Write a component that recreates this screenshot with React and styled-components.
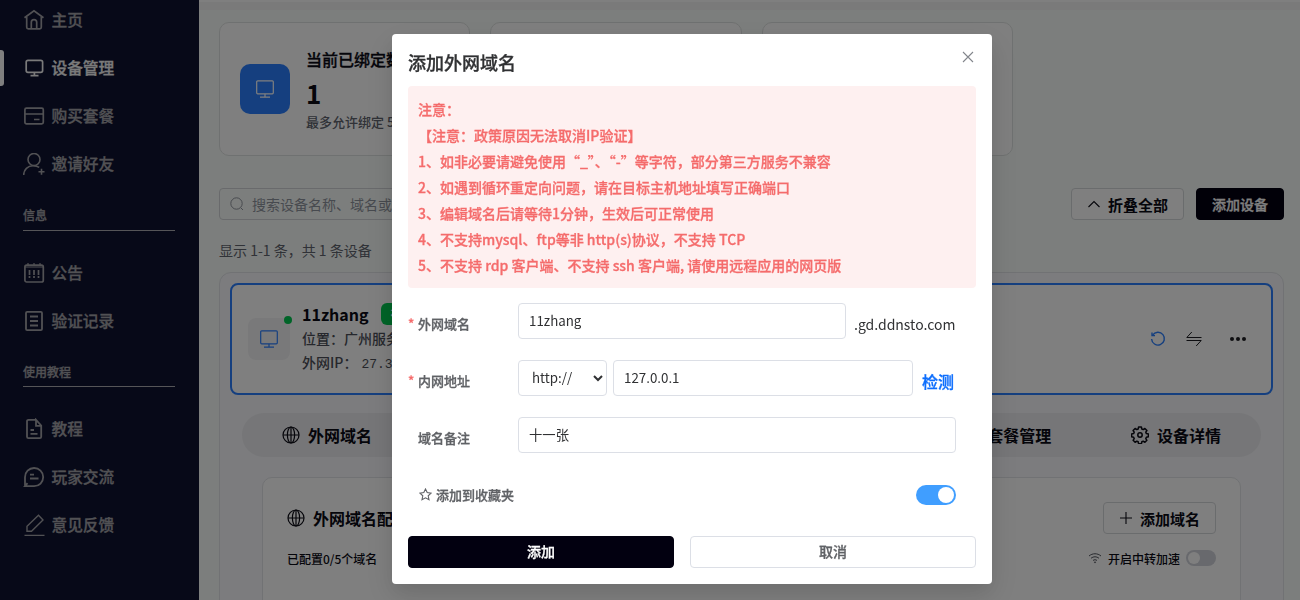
import React from "react";
import styled, { createGlobalStyle, css } from "styled-components";

const GlobalStyle = createGlobalStyle`
  * {
    box-sizing: border-box;
  }
  body {
    margin: 0;
    overflow: hidden;
    font-family: "Noto Sans CJK SC", sans-serif;
    color: #0a0a14;
  }
  button, input, select {
    font-family: inherit;
  }
`;

// a touch heavier than medium, without the wider bold letters
const strong = css`
  font-weight: 500;
  -webkit-text-stroke: 0.3px currentColor;
`;

const Page = styled.div`
  display: flex;
  width: 1300px;
  height: 600px;
  overflow: hidden;
  background: #f9fdfa;
`;

/* ---------- sidebar ---------- */

const Sidebar = styled.nav`
  flex: none;
  width: 199px;
  height: 604px;
  margin-top: -4px;
  background: #0f1230;
`;

const NavItem = styled.a`
  display: flex;
  align-items: center;
  gap: 6.5px;
  height: 48px;
  padding-left: 23px;
  font-size: 15.7px;
  color: ${(p) => (p.$active ? "#f4f4f4" : "#a3a3a8")};
  ${strong}

  svg {
    flex: none;
    width: 22px;
    height: 22px;
  }

  span {
    padding-bottom: 2px;
  }
`;

const ActiveRow = styled.div`
  display: flex;
  align-items: center;

  &::before {
    content: "";
    width: 4px;
    height: 36px;
    border-radius: 0 3px 3px 0;
    background: #fff;
  }

  ${NavItem} {
    padding-left: 19px;
  }
`;

const NavSection = styled.div`
  height: ${(p) => p.$height}px;
  padding: 18px 24px 0 23px;
  font-size: 12px;
  line-height: 18px;
  color: #a3a3a8;
  ${strong}

  &::after {
    content: "";
    display: block;
    height: 1px;
    margin-top: ${(p) => p.$height - 55}px;
    background: #aaaab0;
  }
`;

/* ---------- main ---------- */

const Main = styled.main`
  flex: 1;
  min-width: 0;
`;

const TopBar = styled.div`
  height: 10px;
  border-top: 2px solid #fff;
  background: #f4f4f4;
`;

const Content = styled.div`
  padding: 12px 16px 0 20px;
`;

const Stats = styled.div`
  display: grid;
  grid-template-columns: repeat(4, 1fr);
  gap: 20px;
`;

const StatCard = styled.div`
  display: flex;
  align-items: center;
  gap: 16px;
  height: 134px;
  padding: 0 20px;
  border: 1px solid #dfe3e2;
  border-radius: 10px;
  background: #fff;
  overflow: hidden;
  white-space: nowrap;
`;

const StatIcon = styled.div`
  display: flex;
  align-items: center;
  justify-content: center;
  flex: none;
  width: 50px;
  height: 50px;
  border-radius: 10px;
  background: #2b7fff;
  color: #fff;
`;

const StatTitle = styled.div`
  padding-top: 1px;
  font-size: 16px;
  line-height: 24px;
  ${strong}
`;

const StatValue = styled.div`
  margin-top: 3px;
  font-size: 26px;
  font-weight: 700;
  line-height: 38px;
`;

const StatNote = styled.div`
  font-size: 13px;
  font-weight: 500;
  line-height: 20px;
  color: #60646e;
`;

const Toolbar = styled.div`
  display: flex;
  gap: 12px;
  margin-top: 32px;
`;

const Search = styled.div`
  display: flex;
  align-items: center;
  gap: 8px;
  width: 400px;
  height: 32px;
  margin-right: auto;
  padding-left: 10px;
  border: 1px solid #d2d4d8;
  border-radius: 4px;
  font-size: 14px;
  color: #8f949e;
`;

const Button = styled.button`
  display: flex;
  align-items: center;
  justify-content: center;
  gap: 6px;
  width: ${(p) => p.$width || "auto"};
  height: 32px;
  padding: 0;
  border: 1px solid ${(p) => (p.$dark ? "#020010" : "#d5d8da")};
  border-radius: 4px;
  background: ${(p) => (p.$dark ? "#020010" : "#fff")};
  color: ${(p) => (p.$dark ? "#fff" : "#0a0a14")};
  font-size: 14px;
  line-height: 20px;
  ${strong}
`;

const IconButton = styled(Button)`
  font-size: 15px;
  font-weight: 700;
  -webkit-text-stroke: 0;

  span {
    padding: 2px 0 0 1px;
  }
`;

const Count = styled.div`
  margin-top: 19px;
  font-size: 14px;
  line-height: 22px;
  color: #60646e;
`;

const DevicePanel = styled.section`
  height: 400px;
  margin-top: 11px;
  padding: 10px;
  border: 1px solid #e2e4e8;
  border-radius: 12px;
  background: #f8f9fc;
`;

const DeviceCard = styled.div`
  display: flex;
  align-items: center;
  height: 112px;
  padding: 0 24px 0 16px;
  border: 2px solid #2b7fff;
  border-radius: 8px;
  background: #fff;
`;

const DeviceIcon = styled.div`
  position: relative;
  display: flex;
  align-items: center;
  justify-content: center;
  width: 42px;
  height: 42px;
  margin-right: 12px;
  border-radius: 8px;
  background: #f3f3f5;
  color: #2b7fff;
`;

const OnlineDot = styled.i`
  position: absolute;
  top: -2px;
  right: -2px;
  width: 8px;
  height: 8px;
  border-radius: 50%;
  background: #00c950;
`;

const DeviceInfo = styled.div`
  margin-right: auto;
  padding-bottom: 2px;
  font-size: 14px;
  font-weight: 500;
  line-height: 24px;
  color: #4c4f58;
`;

const DeviceName = styled.div`
  display: flex;
  align-items: center;
  gap: 12px;
  height: 27px;
  padding-top: 2px;
  font-size: 16px;
  font-weight: 700;
  color: #0a0a14;
`;

const Badge = styled.span`
  width: 50px;
  height: 22px;
  padding-left: 10px;
  border-radius: 6px;
  background: #00c950;
  color: #fff;
  font-size: 12px;
  line-height: 22px;
`;

const Ip = styled.span`
  margin-left: 4px;
  font-family: "Liberation Mono", monospace;
  font-size: 13px;
  font-weight: 400;
`;

const Actions = styled.div`
  display: flex;
  align-items: center;
  gap: 18px;
  color: #1c1d22;
`;

const RefreshWrap = styled.span`
  display: flex;
  color: #2b7fff;
`;

const MoreWrap = styled.span`
  display: flex;
  margin-left: 8px;
`;

const Tabs = styled.div`
  display: grid;
  grid-template-columns: repeat(6, 1fr);
  height: 44px;
  margin: 18px 12px 0;
  border-radius: 22px;
  background: #ececf0;
`;

const Tab = styled.div`
  grid-column: ${(p) => p.$column};
  display: flex;
  align-items: center;
  justify-content: center;
  gap: 8px;
  font-size: 16px;
  font-weight: 700;
`;

const ConfigCard = styled.div`
  height: 300px;
  margin: 20px 32px 0;
  padding: 24px;
  border: 1px solid #e2e4e8;
  border-radius: 10px;
  background: #fff;
`;

const Between = styled.div`
  display: flex;
  align-items: center;
  justify-content: space-between;
`;

const ConfigTitle = styled.div`
  display: flex;
  align-items: center;
  gap: 8px;
  font-size: 16px;
  font-weight: 700;
`;

const ConfigNote = styled(Between)`
  margin-top: 14px;
  height: 20px;
  font-size: 12px;
  font-weight: 500;
`;

const Relay = styled.div`
  display: flex;
  align-items: center;
  gap: 6px;

  svg {
    color: #50535c;
  }
`;

const Switch = styled.span`
  display: flex;
  align-items: center;
  justify-content: ${(p) => (p.$on ? "flex-end" : "flex-start")};
  width: ${(p) => (p.$on ? 40 : 30)}px;
  height: ${(p) => (p.$on ? 20 : 16)}px;
  padding: 0 2px;
  border-radius: 10px;
  background: ${(p) => (p.$on ? "#409eff" : "#d0d3da")};

  &::before {
    content: "";
    width: ${(p) => (p.$on ? 16 : 12)}px;
    height: ${(p) => (p.$on ? 16 : 12)}px;
    border-radius: 50%;
    background: #fff;
  }
`;

/* ---------- dialog ---------- */

const Overlay = styled.div`
  position: fixed;
  inset: 0;
  padding-top: 34px;
  background: rgba(0, 0, 0, 0.5);
`;

const Dialog = styled.div`
  width: 600px;
  height: 550px;
  margin-left: 392px;
  padding: 16px;
  border-radius: 4px;
  background: #fff;
  box-shadow: 0 12px 32px 4px rgba(0, 0, 0, 0.08), 0 8px 20px rgba(0, 0, 0, 0.08);
`;

const DialogHead = styled(Between)`
  height: 36px;
  padding-bottom: 12px;
  font-size: 18px;
  line-height: 24px;
  color: #303133;

  svg {
    margin: -10px 2px 0 0;
    color: #83868c;
  }
`;

const DialogTitle = styled.div`
  ${strong}
`;

const Notice = styled.div`
  padding: 10px;
  border-radius: 4px;
  background: #fef0f0;
  color: #f56c6c;
  font-size: 14px;
  line-height: 26px;
  ${strong}
`;

const Form = styled.div`
  padding: 15px 20px 0 0;
`;

const FormRow = styled.div`
  display: flex;
  height: 36px;
  margin-bottom: 21px;
`;

const Label = styled.label`
  flex: none;
  width: 110px;
  padding-top: 11px;
  font-size: 13px;
  line-height: 20px;
  color: #606266;
  ${strong}

  &::before {
    content: "*";
    display: inline-block;
    width: 10px;
    color: #f56c6c;
    visibility: ${(p) => (p.$required ? "visible" : "hidden")};
  }
`;

const Input = styled.input`
  flex: 1;
  min-width: 0;
  height: 36px;
  padding: 0 10px 1px;
  border: 1px solid #dcdfe6;
  border-radius: 4px;
  background: #fff;
  color: #303133;
  font-size: 13.333px;
`;

const Select = styled.select`
  width: 89px;
  height: 36px;
  margin-right: 6px;
  padding: 0 9px 1px;
  border: 1px solid #dcdfe6;
  border-radius: 4px;
  background: #fff;
  color: #303133;
  font-size: 13.333px;
`;

const Suffix = styled.span`
  width: 102px;
  margin-left: 8px;
  padding-top: 11px;
  font-size: 14px;
  line-height: 20px;
  color: #303133;
`;

const CheckLink = styled.a`
  width: 34px;
  margin-left: 9px;
  padding-top: 10px;
  font-size: 16px;
  line-height: 22px;
  color: #0d6efd;
  ${strong}
`;

const FavRow = styled(Between)`
  height: 20px;
  margin: 32px 0 31px;
  padding-left: 11px;
`;

const FavLabel = styled.span`
  display: flex;
  align-items: center;
  gap: 4px;
  padding-bottom: 2px;
  font-size: 13px;
  color: #606266;
  ${strong}
`;

const DialogFoot = styled.div`
  display: flex;
  gap: 16px;

  ${Button} {
    padding-bottom: 2px;
  }

  ${Button}:last-child {
    border-color: #dcdfe6;
    color: #606266;
  }
`;

/* ---------- icons ---------- */

const Icon = ({ size = 22, box = 24, width = 2, children }) => (
  <svg
    width={size}
    height={size}
    viewBox={`0 0 ${box} ${box}`}
    fill="none"
    stroke="currentColor"
    strokeWidth={width}
  >
    {children}
  </svg>
);

const HomeIcon = () => (
  <Icon box={22} width={1.7}>
    <path d="M1.5 8.8 11 1.8l9.5 7M3.7 8v10.2a1.6 1.6 0 0 0 1.6 1.6h11.4a1.6 1.6 0 0 0 1.6-1.6V8" />
    <path d="M8.3 19.5v-6.200a2.700 2.700 0 0 1 5.400 0v6.200" />
  </Icon>
);

const ScreenIcon = () => (
  <Icon box={22} width={1.7}>
    <rect x="3.2" y="3.3" width="16.4" height="12" rx="1.8" />
    <path d="M11.4 15.5v3M7.5 18.6h8" />
  </Icon>
);

const CardIcon = () => (
  <Icon box={22} width={1.7}>
    <rect x="1.9" y="3.2" width="18.4" height="15.6" rx="1.6" />
    <path d="M2 9h18M11 14.5h5.5" />
  </Icon>
);

const InviteIcon = () => (
  <Icon box={22} width={1.6}>
    <circle cx="11" cy="6.5" r="6" />
    <path d="M.7 22c0-5.4 4-9.3 9.5-9.3 2.6 0 4.6.6 6 1.7M18.5 15.8v6M15.5 18.8h6" />
  </Icon>
);

const CalendarIcon = () => (
  <Icon box={22} width={1.7}>
    <rect x="1.9" y="3.2" width="18.4" height="16.8" rx="1.8" />
    <path d="M5 .9v3M11 .9v3M17 .9v3M2 5h18" strokeWidth="1.2" />
    <path d="M6.5 8v8M11 8v8M15.5 8v8" strokeDasharray="5 1 2" />
  </Icon>
);

const ListIcon = () => (
  <Icon box={22} width={1.8}>
    <rect x="3" y="1.8" width="16" height="18.4" rx="1.2" />
    <path d="M7 6.5h8M7 11h8M7 15.5h8" />
  </Icon>
);

const DocIcon = () => (
  <Icon box={22} width={1.8}>
    <path d="M13 1.8H5.5A1.5 1.5 0 0 0 4 3.3v15.4a1.5 1.5 0 0 0 1.5 1.5h11.2a1.5 1.5 0 0 0 1.5-1.5V7.5L13 1.8v6h5" />
    <path d="M7.5 12h3.500M7.500 15.800h7" />
  </Icon>
);

const ChatIcon = () => (
  <Icon box={22} width={1.8}>
    <path d="M2 20.200V11.200a9.100 9.100 0 1 1 9.100 9H2l2.500-3" />
    <path d="M7 8.700h4M7 12.500h8.500" />
  </Icon>
);

const PenIcon = () => (
  <Icon box={22} width={1.4}>
    <path d="M4 17.300v-5L15.500 1.200 20 6 8.500 17.300zM1.500 21.500h20" />
  </Icon>
);

const MonitorIcon = ({ size = 20 }) => (
  <Icon size={size} box={20} width={1.2}>
    <rect x="1.700" y="1.800" width="16.600" height="13" rx="1" />
    <path d="M10 15v3M5 18.200h10" />
  </Icon>
);

const GlobeIcon = () => (
  <Icon size={18} box={18} width={1.2}>
    <circle cx="9" cy="9" r="8" />
    <ellipse cx="9" cy="9" rx="3.600" ry="8" />
    <path d="M1 9h16M9 1v16" />
  </Icon>
);

const GearIcon = () => (
  <Icon size={18} box={18} width={1.5}>
    <circle cx="9" cy="9" r="2.200" />
    <path
      strokeLinejoin="round"
      d="M7.600 1h2.800l.4 2 1.400.6 1.700-1.100 2 2-1.100 1.700.6 1.400 2 .4v2.800l-2 .4-.6 1.400 1.100 1.700-2 2-1.700-1.100-1.400.6-.4 2H7.600l-.4-2-1.400-.6-1.700 1.100-2-2 1.100-1.700-.6-1.400-2-.4V8l2-.4.6-1.400-1.100-1.700 2-2 1.700 1.100 1.400-.6z"
    />
  </Icon>
);

const SearchIcon = () => (
  <Icon size={14} box={14} width={1}>
    <circle cx="6.500" cy="6.500" r="5.700" />
    <path d="m11 11 2 2" />
  </Icon>
);

const UpIcon = () => (
  <Icon size={14} box={14} width={1.1}>
    <path d="m1.500 10 5.500-5.500 5.500 5.500" />
  </Icon>
);

const PlusIcon = () => (
  <Icon size={14} box={14} width={1.1}>
    <path d="M7 1v12M1 7h12" />
  </Icon>
);

const WifiIcon = () => (
  <Icon size={14} box={14} width={1}>
    <path d="M1 5c3.500-3 8.500-3 12 0M3 7.300c2.400-2 5.600-2 8 0M5 9.500c1.200-1 2.800-1 4 0" />
    <circle cx="7" cy="11.300" r=".5" />
  </Icon>
);

const RefreshIcon = () => (
  <Icon size={18} box={18} width={1.4}>
    <path d="M3.600 5.200a6.400 6.400 0 1 1-1 3.800" />
    <path d="M3 2.600v3h3" />
  </Icon>
);

const SwapIcon = () => (
  <Icon size={18} box={18} width={1}>
    <path d="M16.500 7.500H1.800l5-5.500M1.500 10.500h14.700l-5 5.500" />
  </Icon>
);

const MoreIcon = () => (
  <svg width="18" height="18" fill="currentColor">
    <circle cx="3" cy="9" r="2" />
    <circle cx="9" cy="9" r="2" />
    <circle cx="15" cy="9" r="2" />
  </svg>
);

const CloseIcon = () => (
  <Icon size={12} box={12} width={1.1}>
    <path d="m1 1 10 10M11 1 1 11" />
  </Icon>
);

const StarIcon = () => (
  <Icon size={13} box={13} width={1.1}>
    <path d="m6.500 1 1.700 3.600 3.900.5-2.900 2.700.8 3.900-3.500-1.900L3 11.700l.8-3.900L.9 5.100l3.900-.5z" />
  </Icon>
);

const notices = [
  "注意：",
  "【注意：政策原因无法取消IP验证】",
  "1、如非必要请避免使用“_”、“-”等字符，部分第三方服务不兼容",
  "2、如遇到循环重定向问题，请在目标主机地址填写正确端口",
  "3、编辑域名后请等待1分钟，生效后可正常使用",
  "4、不支持mysql、ftp等非 http(s)协议，不支持 TCP",
  "5、不支持 rdp 客户端、不支持 ssh 客户端, 请使用远程应用的网页版",
];

function SideNav() {
  return (
    <Sidebar>
      <NavItem><HomeIcon /><span>主页</span></NavItem>
      <ActiveRow>
        <NavItem $active><ScreenIcon /><span>设备管理</span></NavItem>
      </ActiveRow>
      <NavItem><CardIcon /><span>购买套餐</span></NavItem>
      <NavItem><InviteIcon /><span>邀请好友</span></NavItem>
      <NavSection $height={61}>信息</NavSection>
      <NavItem><CalendarIcon /><span>公告</span></NavItem>
      <NavItem><ListIcon /><span>验证记录</span></NavItem>
      <NavSection $height={60}>使用教程</NavSection>
      <NavItem><DocIcon /><span>教程</span></NavItem>
      <NavItem><ChatIcon /><span>玩家交流</span></NavItem>
      <NavItem><PenIcon /><span>意见反馈</span></NavItem>
    </Sidebar>
  );
}

function Device() {
  return (
    <DevicePanel>
      <DeviceCard>
        <DeviceIcon>
          <MonitorIcon />
          <OnlineDot />
        </DeviceIcon>
        <DeviceInfo>
          <DeviceName>11zhang<Badge>在</Badge></DeviceName>
          <div>位置：广州服务</div>
          <div>外网IP：<Ip>27.3</Ip></div>
        </DeviceInfo>
        <Actions>
          <RefreshWrap><RefreshIcon /></RefreshWrap>
          <SwapIcon />
          <MoreWrap><MoreIcon /></MoreWrap>
        </Actions>
      </DeviceCard>
      <Tabs>
        <Tab $column={1}><GlobeIcon />外网域名</Tab>
        <Tab $column={5}><GlobeIcon />套餐管理</Tab>
        <Tab $column={6}><GearIcon />设备详情</Tab>
      </Tabs>
      <ConfigCard>
        <Between>
          <ConfigTitle><GlobeIcon />外网域名配</ConfigTitle>
          <IconButton $width="113px"><PlusIcon /><span>添加域名</span></IconButton>
        </Between>
        <ConfigNote>
          <span>已配置0/5个域名</span>
          <Relay><WifiIcon />开启中转加速<Switch /></Relay>
        </ConfigNote>
      </ConfigCard>
    </DevicePanel>
  );
}

function AddDomain() {
  return (
    <Overlay>
      <Dialog>
        <DialogHead>
          <DialogTitle>添加外网域名</DialogTitle>
          <CloseIcon />
        </DialogHead>
        <Notice>
          {notices.map((line) => (
            <div key={line}>{line}</div>
          ))}
        </Notice>
        <Form>
          <FormRow>
            <Label $required>外网域名</Label>
            <Input defaultValue="11zhang" />
            <Suffix>.gd.ddnsto.com</Suffix>
          </FormRow>
          <FormRow>
            <Label $required>内网地址</Label>
            <Select>
              <option>http://</option>
            </Select>
            <Input defaultValue="127.0.0.1" />
            <CheckLink>检测</CheckLink>
          </FormRow>
          <FormRow>
            <Label>域名备注</Label>
            <Input defaultValue="十一张" />
          </FormRow>
          <FavRow>
            <FavLabel><StarIcon />添加到收藏夹</FavLabel>
            <Switch $on />
          </FavRow>
        </Form>
        <DialogFoot>
          <Button $dark $width="266px">添加</Button>
          <Button $width="286px">取消</Button>
        </DialogFoot>
      </Dialog>
    </Overlay>
  );
}

function App() {
  return (
    <>
      <GlobalStyle />
      <Page>
        <SideNav />
        <Main>
          <TopBar />
          <Content>
            <Stats>
              <StatCard>
                <StatIcon><MonitorIcon /></StatIcon>
                <div>
                  <StatTitle>当前已绑定数</StatTitle>
                  <StatValue>1</StatValue>
                  <StatNote>最多允许绑定 5</StatNote>
                </div>
              </StatCard>
              <StatCard />
              <StatCard />
            </Stats>
            <Toolbar>
              <Search><SearchIcon />搜索设备名称、域名或</Search>
              <IconButton $width="113px"><UpIcon /><span>折叠全部</span></IconButton>
              <Button $dark $width="88px">添加设备</Button>
            </Toolbar>
            <Count>显示 1-1 条，共 1 条设备</Count>
            <Device />
          </Content>
        </Main>
      </Page>
      <AddDomain />
    </>
  );
}

export default App;
